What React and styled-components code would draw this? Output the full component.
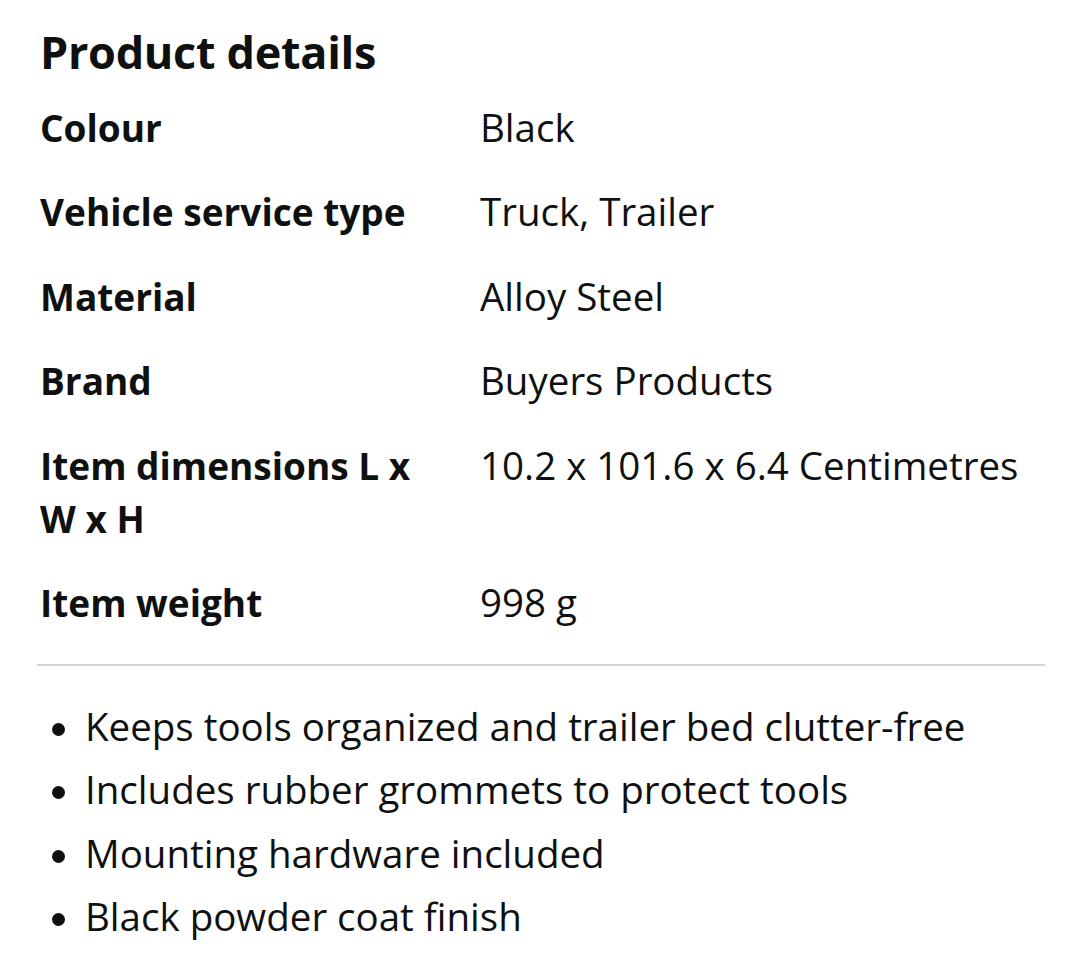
import React from "react"
import styled, { createGlobalStyle } from "styled-components"

const GlobalStyle = createGlobalStyle`
  body {
    margin: 0;
    background: #ffffff;
    color: #0f1111;
    font-family: "Open Sans", "Noto Sans", sans-serif;
  }
`

const details = [
  { label: "Colour", value: "Black" },
  { label: "Vehicle service type", value: "Truck, Trailer" },
  { label: "Material", value: "Alloy Steel" },
  { label: "Brand", value: "Buyers Products" },
  { label: "Item dimensions L x W x H", value: "10.2 x 101.6 x 6.4 Centimetres" },
  { label: "Item weight", value: "998 g" },
]

const features = [
  "Keeps tools organized and trailer bed clutter-free",
  "Includes rubber grommets to protect tools",
  "Mounting hardware included",
  "Black powder coat finish",
]

const Section = styled.section`
  width: 1080px;
  padding: 24px 35px 0 40px;
  box-sizing: border-box;
`

const Title = styled.h2`
  margin: 0 0 21px;
  font-size: 45px;
  line-height: 56px;
  font-weight: 700;
  letter-spacing: -0.3px;
`

const Table = styled.div`
  display: grid;
  grid-template-columns: 440px 1fr;
  row-gap: 31.4px;
`

const Label = styled.div`
  font-size: 37px;
  line-height: 53px;
  font-weight: 700;
  padding-right: 48px;
`

const Value = styled.div`
  font-size: 38.5px;
  line-height: 53px;
`

const Divider = styled.hr`
  margin: 35px 0 0 -3px;
  border: none;
  border-top: 2px solid #d3d5d5;
`

const List = styled.ul`
  margin: 0;
  padding: 29px 0 0 45px;
  list-style: none;
`

const Item = styled.li`
  position: relative;
  font-size: 38.5px;
  line-height: 63.5px;

  &::before {
    content: "";
    position: absolute;
    left: -33px;
    top: 28px;
    width: 13px;
    height: 13px;
    border-radius: 50%;
    background: #0f1111;
  }
`

const App = () => (
  <>
    <GlobalStyle />
    <Section>
      <Title>Product details</Title>
      <Table>
        {details.map((d) => (
          <React.Fragment key={d.label}>
            <Label>{d.label}</Label>
            <Value>{d.value}</Value>
          </React.Fragment>
        ))}
      </Table>
      <Divider />
      <List>
        {features.map((f) => (
          <Item key={f}>{f}</Item>
        ))}
      </List>
    </Section>
  </>
)

export default App
